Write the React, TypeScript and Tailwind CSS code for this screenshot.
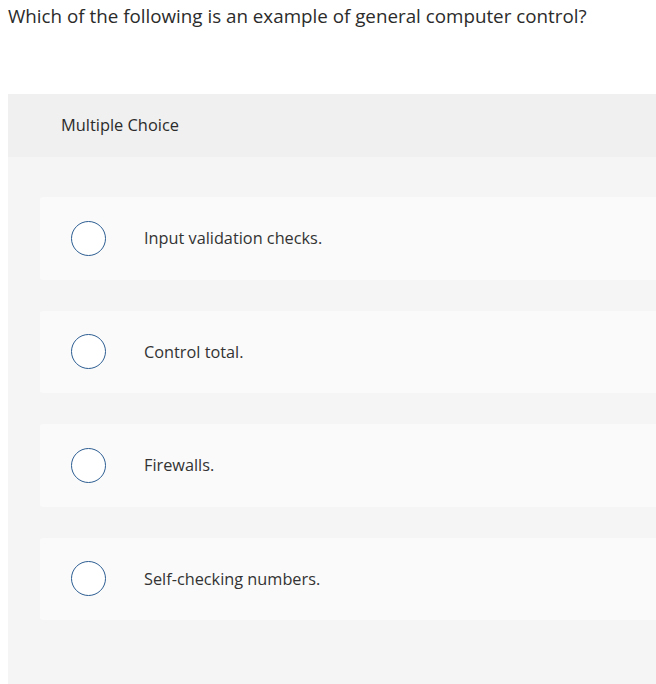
import React from "react";

const options = [
  "Input validation checks.",
  "Control total.",
  "Firewalls.",
  "Self-checking numbers.",
];

export default function App() {
  return (
    <div className="w-[656px] h-[684px] overflow-hidden bg-white text-[#2b2b2b]" style={{ fontFamily: '"Open Sans", "Liberation Sans", sans-serif' }}>
      <div className="w-[760px]">
        <p className="pl-2 pt-[3px] text-[18.8px] leading-[26px] text-[#2b2b2b]">
          Which of the following is an example of general computer control?
        </p>
        <div className="ml-2 mt-[65px] bg-[#f5f5f5]">
          <div className="h-[63px] bg-[#f0f0f0] flex items-center pl-[53px] text-[16.4px] text-[#2b2b2b]">
            Multiple Choice
          </div>
          <div className="pt-10 pl-8 flex flex-col gap-[31px] pb-20">
            {options.map((o) => (
              <div key={o} className="h-[82.5px] rounded-[3px] bg-[#fafafa] flex items-center pl-[31px]">
                <div className="w-[35px] h-[35px] rounded-full border-[1.5px] border-[#2d5e92] bg-white shrink-0" />
                <span className="ml-[38px] text-[16.3px] text-[#333]">{o}</span>
              </div>
            ))}
          </div>
        </div>
      </div>
    </div>
  );
}
